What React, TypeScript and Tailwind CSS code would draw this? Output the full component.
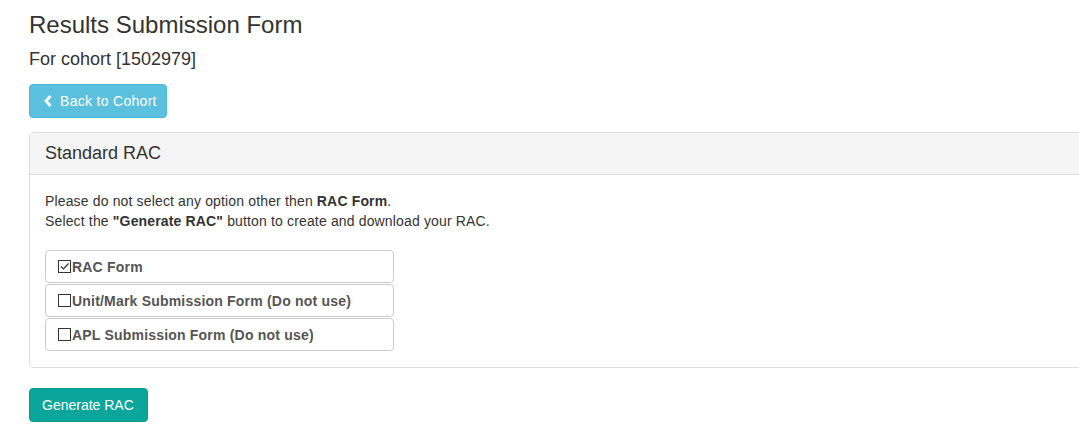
import { ReactNode } from "react";

function Box({ checked }: { checked?: boolean }) {
  return (
    <span className="mr-px inline-flex h-[13px] w-[13px] shrink-0 items-center justify-center border border-[#333] bg-white">
      {checked && (
        <svg viewBox="0 0 11 11" className="h-[11px] w-[11px]">
          <path d="M2 5.5l2.5 2.5L9.5 2.5" fill="none" stroke="#333" strokeWidth="1.2" />
        </svg>
      )}
    </span>
  );
}

function Option({ label, checked }: { label: string; checked?: boolean }) {
  return (
    <div className="flex h-[33px] w-[349px] items-center rounded border border-[#ccc] px-3 text-[14px] font-bold text-[#555]">
      <Box checked={checked} />
      <span className="tracking-[0.2px]">{label}</span>
    </div>
  );
}

function Btn({ children, className }: { children: ReactNode; className: string }) {
  return (
    <button
      className={
        "flex h-[34px] items-center rounded border text-[14px] text-white " +
        className
      }
    >
      {children}
    </button>
  );
}

export default function App() {
  return (
    <div className="h-[433px] w-full overflow-hidden bg-white font-['Liberation_Sans',Arial,sans-serif] text-[#333]">
      <div className="pl-[29px]">
        <h3 className="pt-[11px] text-[24px] leading-[28px]">Results Submission Form</h3>
        <h4 className="mt-[10px] text-[18px] leading-[20px]">For cohort [1502979]</h4>
        <Btn className="mt-[15px] w-[138px] border-[#46b8da] bg-[#5bc0de] pl-[14px]">
          <svg viewBox="0 0 8 12" className="mr-[8px] h-[12px] w-[8px]">
            <path d="M6.5 1L2 6l4.5 5" fill="none" stroke="#fff" strokeWidth="2.8" />
          </svg>
          <span className="tracking-[0.3px]">Back to Cohort</span>
        </Btn>
        <div className="mt-[14px] w-[1100px] rounded border border-[#ddd]">
          <div className="flex h-[42px] items-center border-b border-[#ddd] bg-[#f5f5f5] px-[15px] text-[18px]">
            Standard RAC
          </div>
          <div className="px-[15px] pt-[16px] pb-[16px] text-[14px] leading-[20px] tracking-[0.15px]">
            <p>
              Please do not select any option other then <b>RAC Form</b>.
            </p>
            <p>
              Select the <b>"Generate RAC"</b> button to create and download your RAC.
            </p>
            <div className="mt-[19px] flex flex-col gap-px">
              <Option label="RAC Form" checked />
              <Option label="Unit/Mark Submission Form (Do not use)" />
              <Option label="APL Submission Form (Do not use)" />
            </div>
          </div>
        </div>
        <Btn className="mt-[20px] w-[119px] border-[#079890] bg-[#0aa69c] px-3">Generate RAC</Btn>
      </div>
    </div>
  );
}
